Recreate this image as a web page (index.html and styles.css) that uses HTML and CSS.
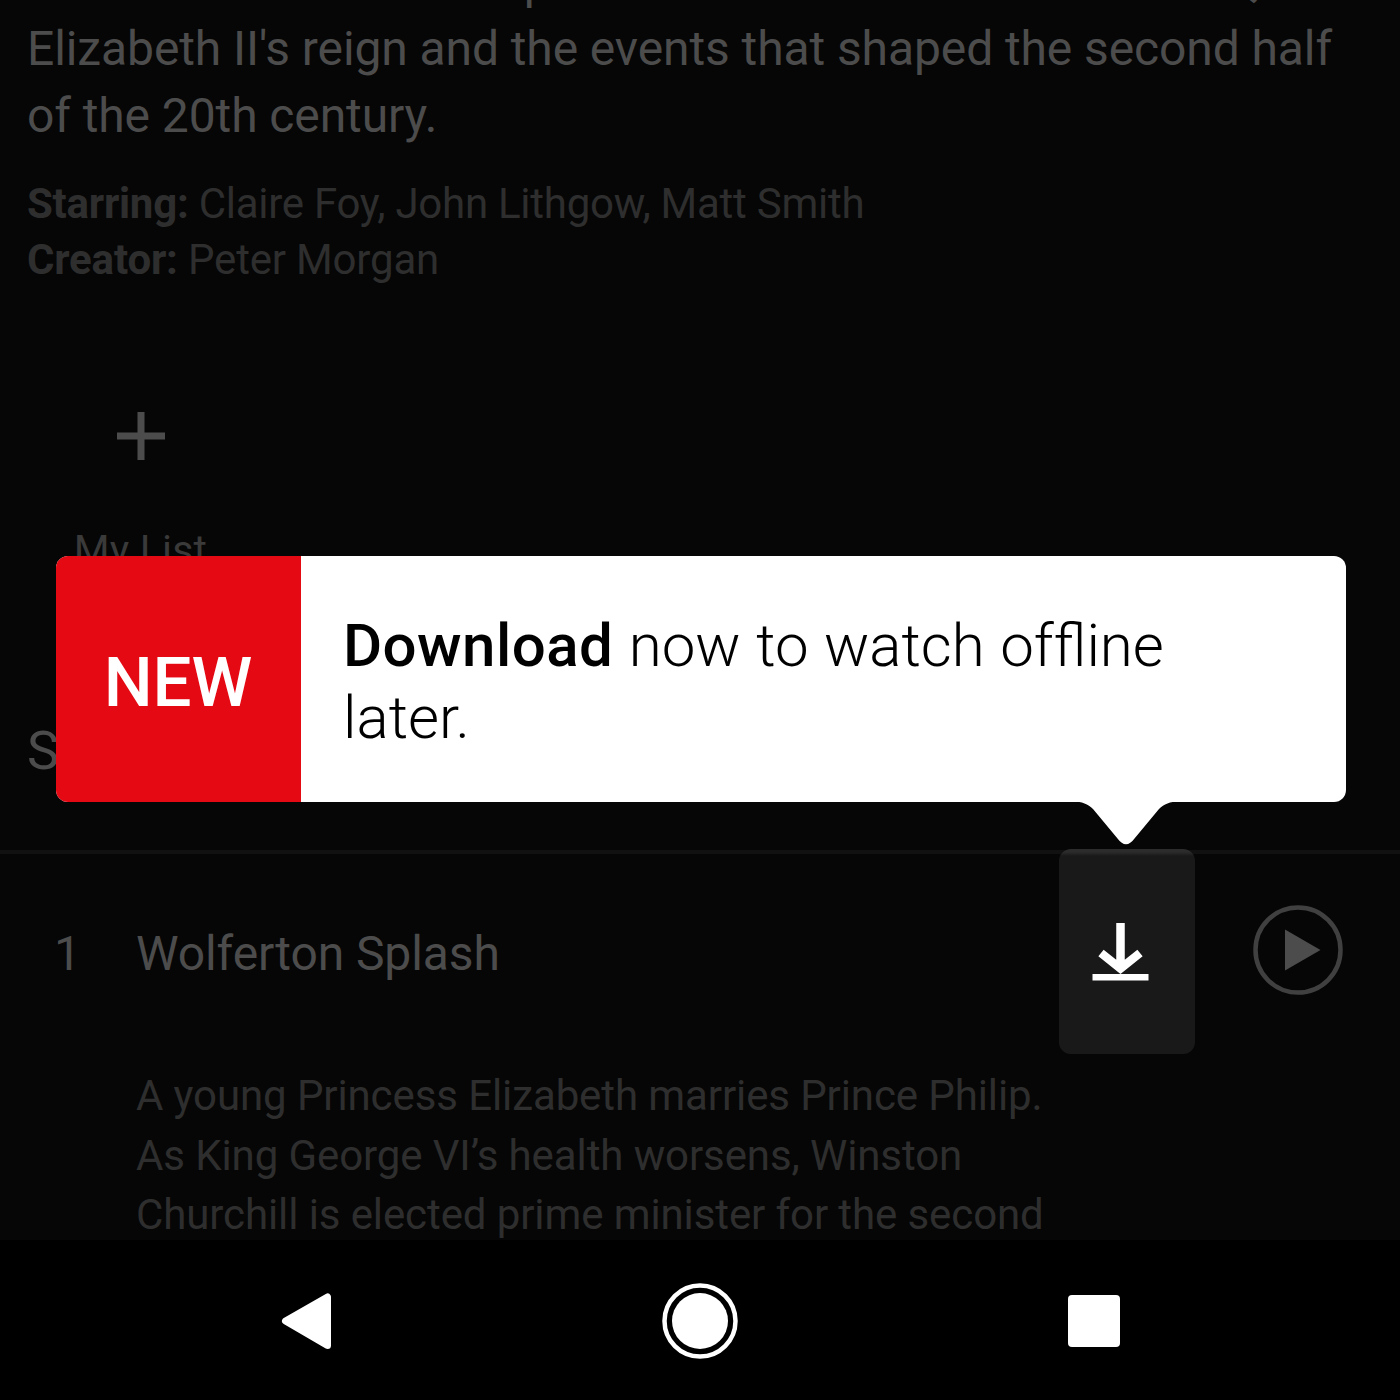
FILE: index.html
```html
<!DOCTYPE html>
<html lang="en">
<head>
<meta charset="utf-8">
<title>The Crown</title>
<link rel="stylesheet" href="styles.css">
</head>
<body>
<div class="screen">
  <main class="details">
    <p class="synopsis">This drama follows the political rivalries and romance of Queen<br>Elizabeth II's reign and the events that shaped the second half<br>of the 20th century.</p>
    <div class="credits">
      <div><b>Starring:</b> Claire Foy, John Lithgow, Matt Smith</div>
      <div class="creator"><b>Creator:</b> Peter Morgan</div>
    </div>
    <div class="actions">
      <div class="action">
        <svg class="plus" viewBox="0 0 50 50"><path d="M25 1v48M1 25h48"/></svg>
        <span class="mylist">My List</span>
      </div>
    </div>
    <div class="season">Season 1</div>
    <section class="episode">
      <div class="episode-head">
        <span class="number">1</span>
        <span class="title">Wolferton Splash</span>
        <div class="download">
          <svg viewBox="0 0 58 60"><path d="M29.500 1v42M10 31l19.500 15.500L49 31" fill="none" stroke="#fff" stroke-width="8.500"/><path d="M1.500 52h56v6.500h-56z" fill="#fff"/></svg>
        </div>
        <svg class="play" viewBox="0 0 90 90"><circle cx="45" cy="45" r="42.500" fill="none" stroke="#404040" stroke-width="4.500"/><path d="M32 24.500v41L67.500 45z" fill="#4c4c4c"/></svg>
      </div>
      <p class="summary">A young Princess Elizabeth marries Prince Philip.<br>As King George VI’s health worsens, Winston<br>Churchill is elected prime minister for the second</p>
    </section>
  </main>
  <nav class="navbar">
    <svg class="back" viewBox="0 0 50 56"><path d="M46.500 4v48.500L4.500 28z" fill="#fff" stroke="#fff" stroke-width="7" stroke-linejoin="round"/></svg>
    <svg class="home" viewBox="0 0 76 76"><circle cx="38" cy="38" r="35.500" fill="none" stroke="#fff" stroke-width="4.500"/><circle cx="38" cy="38" r="28" fill="#fff"/></svg>
    <span class="recent"></span>
  </nav>
  <aside class="tooltip">
    <div class="badge">NEW</div>
    <div class="message"><b>Download</b> now to watch of&zwnj;fline<br>later.</div>
    <svg class="pointer" viewBox="0 0 106 46"><path d="M0 0v1.500C9 1.500 15 4 20 9l24.500 29.500Q53 50 61.500 38.500L86 9c5-5 11-7.500 20-7.500V0z" fill="#fff"/></svg>
  </aside>
</div>
</body>
</html>
```

FILE: styles.css
```css
* { box-sizing: border-box; }
body {
  margin: 0;
  background: #060606;
  font-family: Roboto, "Liberation Sans", sans-serif;
  color: #4c4c4c;
}
p { margin: 0; }
svg { display: block; }
.screen {
  position: relative;
  width: 1400px;
  height: 1400px;
  overflow: hidden;
  display: flex;
  flex-direction: column;
}
.details {
  height: 1240px;
  overflow: hidden;
  white-space: nowrap;
}
.synopsis {
  margin-top: -52px;
  padding-left: 27px;
  font-size: 48px;
  line-height: 67px;
  letter-spacing: -0.1px;
}
.credits {
  margin-top: 27px;
  padding-left: 27px;
  font-size: 42px;
  line-height: 56px;
  letter-spacing: -0.26px;
  color: #2e2e2e;
}
.creator { letter-spacing: -0.18px; }
.actions {
  display: flex;
  height: 408px;
  padding-top: 123px;
}
.action {
  display: flex;
  flex-direction: column;
  align-items: center;
  width: 281px;
}
.plus {
  width: 50px;
  height: 50px;
  stroke: #4c4c4c;
  stroke-width: 7;
}
.mylist {
  margin-top: 65px;
  font-size: 41px;
  line-height: 48px;
  letter-spacing: 0.2px;
  color: #3a3a3a;
}
.season {
  height: 154px;
  padding: 23px 0 0 27px;
  font-size: 54px;
  line-height: 64px;
}
.episode { border-top: 4px solid #111; }
.episode-head {
  display: flex;
  align-items: flex-start;
  height: 212px;
  font-size: 48px;
  line-height: 56px;
}
.number {
  width: 136px;
  padding: 72px 0 0 54px;
}
.title {
  width: 923px;
  padding-top: 72px;
  letter-spacing: -0.1px;
}
.download {
  width: 136px;
  height: 205px;
  margin-top: -5px;
  padding: 73px 0 0 32px;
  border-radius: 12px;
  background: linear-gradient(#2c2c2c 3px, #191919 7px);
}
.download svg { width: 58px; height: 60px; }
.play {
  width: 90px;
  height: 90px;
  margin: 51px 0 0 58px;
}
.summary {
  padding-left: 136px;
  font-size: 42px;
  line-height: 59.5px;
  letter-spacing: -0.1px;
  color: #2e2e2e;
}
.navbar {
  display: flex;
  align-items: center;
  height: 160px;
  padding: 2px 280px 0 281px;
  justify-content: space-between;
  background: #000;
}
.back { width: 50px; height: 56px; }
.home { width: 76px; height: 76px; }
.recent {
  width: 52px;
  height: 52px;
  border-radius: 4px;
  background: #fff;
}
.tooltip {
  position: absolute;
  left: 55.5px;
  top: 556px;
  display: flex;
  width: 1290.5px;
  height: 245.5px;
  border-radius: 12px;
  background: #fff;
  color: #000;
  white-space: nowrap;
}
.badge {
  display: flex;
  align-items: center;
  justify-content: center;
  width: 245px;
  padding-top: 7px;
  border-radius: 12px 0 0 12px;
  background: #e50914;
  color: #fff;
  font-size: 69px;
  font-weight: 500;
}
.message {
  padding: 54px 0 0 42.5px;
  font-size: 60px;
  font-weight: 300;
  line-height: 71.5px;
  word-spacing: 0.9px;
}
.message b {
  font-weight: 500;
  letter-spacing: 0.45px;
}
.pointer {
  position: absolute;
  left: 1017.5px;
  top: 244px;
  width: 106px;
  height: 46px;
}
```
